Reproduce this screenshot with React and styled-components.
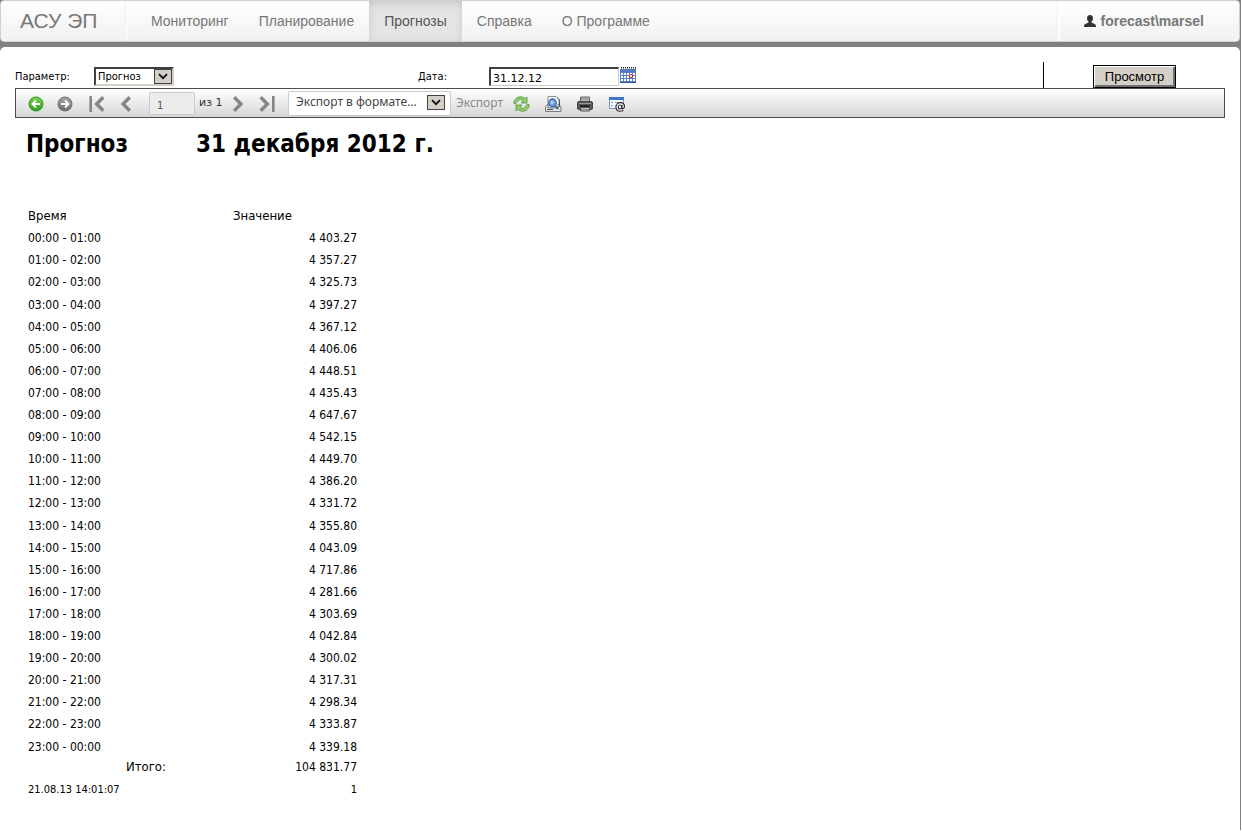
import React from "react";
import styled, { createGlobalStyle } from "styled-components";

const tahoma = '"DejaVu Sans Condensed", "DejaVu Sans", sans-serif';
const verdana = '"DejaVu Sans", sans-serif';
const noto = '"Noto Sans", "DejaVu Sans", sans-serif';
const arial = '"Liberation Sans", Arial, sans-serif';

const GlobalStyle = createGlobalStyle`
  * { box-sizing: border-box; }
  body { margin: 0; background: #fff; color: #000; font: 12px/16px ${tahoma}; }
  button, input, select { font: inherit; color: inherit; margin: 0; }
`;

const Frame = styled.div`
  background: #808080;
  padding-right: 1px;
  margin-right: 1px;
`;

const Navbar = styled.header`
  display: flex;
  align-items: stretch;
  height: 42px;
  border: 1px solid #d0d0d0;
  border-radius: 4px;
  background: linear-gradient(#fff, #f1f1f1);
  font-family: ${arial};
  color: #777;
`;

const Brand = styled.a`
  display: flex;
  align-items: center;
  width: 126px;
  padding-left: 19px;
  border-right: 1px solid #fff;
  box-shadow: inset -1px 0 #f0f0f0;
  font-size: 21px;
  color: inherit;
  text-decoration: none;
`;

const Nav = styled.nav`
  display: flex;
  flex: 1;
  margin-left: 9px;
`;

const NavLink = styled.a`
  display: flex;
  align-items: center;
  padding: 0 15px;
  font-size: 14px;
  text-decoration: none;
  color: ${(p) => (p.$active ? "#555" : "#777")};
  background: ${(p) => (p.$active ? "#e5e5e5" : "none")};
  box-shadow: ${(p) => (p.$active ? "inset 0 3px 8px rgba(0,0,0,.125)" : "none")};
`;

const User = styled.a`
  display: flex;
  align-items: center;
  gap: 4px;
  padding: 0 35px 0 24px;
  border-left: 2px solid #fff;
  box-shadow: -1px 0 #f0f0f0;
  font-size: 14px;
  font-weight: bold;
  color: inherit;
  text-decoration: none;
`;

const Panel = styled.main`
  margin-top: 5px;
  padding: 15px 15px 32px;
  background: #fff;
  border-radius: 5px 5px 0 0;
`;

const Params = styled.form`
  display: grid;
  grid-template-columns: 79px 324px 71px 1fr 182px;
  align-items: center;
  height: 26px;
  font-size: 11px;

  > :not(:last-child) { margin-top: 3px; }
`;

const SelectBox = styled.span`
  position: relative;
  display: inline-block;
  width: ${(p) => p.$width}px;
  height: ${(p) => p.$height}px;
`;

const ParamSelect = styled.select`
  appearance: none;
  display: block;
  width: 100%;
  height: 100%;
  padding: 0 18px 0 2px;
  border: 2px solid;
  border-color: #404040 #d4d0c8 #d4d0c8 #404040;
  border-radius: 0;
  background: #fff;
  line-height: 14px;
`;

const FormatSelect = styled.select`
  appearance: none;
  display: block;
  width: 100%;
  height: 100%;
  padding: 0 28px 2px 7px;
  border: 1px solid #ccc;
  border-radius: 2px;
  background: #fff;
  color: #444;
`;

const DropArrow = styled.span`
  position: absolute;
  top: ${(p) => p.$top}px;
  right: ${(p) => p.$right}px;
  display: grid;
  place-items: center;
  width: 18px;
  height: 15px;
  border: 1px solid #404040;
  background: #d4d0c8;
  pointer-events: none;
`;

const DateField = styled.span`
  display: flex;
  align-items: flex-start;
  gap: 1px;
`;

const DateInput = styled.input`
  width: 130px;
  height: 19px;
  padding: 2px 2px 0;
  border: 1px solid #ccc;
  border-top: 2px solid #404040;
  border-left: 2px solid #404040;
  font-family: ${verdana};
`;

const BareButton = styled.button`
  display: flex;
  padding: 0;
  border: 0;
  background: none;
`;

const ViewCell = styled.span`
  display: flex;
  align-items: flex-end;
  justify-content: center;
  align-self: stretch;
  border-left: 1px solid #000;
`;

const ViewButton = styled.button`
  width: 83px;
  height: 23px;
  padding: 0;
  border: 1px solid #000;
  border-radius: 0;
  background: #d4d0c8;
  box-shadow: inset 1px 1px #fff, inset -2px -2px #707070;
  font-family: ${arial};
  font-size: 13px;
`;

const Toolbar = styled.div`
  display: flex;
  align-items: center;
  height: 30px;
  padding: 0 0 0 5px;
  border: 1px solid #4c4c4c;
  background: linear-gradient(#fff, #d6d6d6);
  font-family: ${noto};
  font-size: 12px;
  color: #333;
`;

const ToolButton = styled.button`
  display: grid;
  place-items: center;
  width: ${(p) => p.$width || 29}px;
  height: 28px;
  padding: 2px 0 0;
  border: 0;
  background: none;
`;

const Pager = styled.div`
  display: flex;
  align-items: center;
  margin: 0 7px 0 3px;
`;

const PageInput = styled.input`
  width: 46px;
  height: 23px;
  margin: 0 4px 0 9px;
  padding: 5px 7px 0;
  border: 1px solid #ccc;
  border-radius: 2px;
  background: #ececec;
  font-family: ${verdana};
  font-size: 10px;
  color: #555;
`;

const PageCount = styled.span`
  width: 24px;
  font: 11px/16px ${verdana};
  white-space: nowrap;
`;

const ExportLink = styled.a`
  width: 49px;
  margin-left: 5px;
  color: #888;
  text-decoration: none;
`;

const Report = styled.section`
  padding: 12px 11px 0;
`;

const Title = styled.h1`
  display: grid;
  grid-template-columns: 170px 1fr;
  margin: 0;
  font-size: 24px;
  line-height: 28px;
`;

const Table = styled.table`
  width: 333px;
  margin-top: 47px;
  border-collapse: collapse;
  table-layout: fixed;

  th, td {
    padding: 0 2px;
    line-height: 22px;
    vertical-align: bottom;
    text-align: left;
    font-weight: normal;
  }
  thead th { font-size: 13px; }
  tbody tr { height: 22px; }
  tbody tr:nth-child(10n + 4) { height: 23px; }
`;

const Value = styled.td`
  && { text-align: right; }
`;

const TotalRow = styled.tr`
  && th, && td { line-height: 18px; }
  && th { font-size: 13px; }
`;

const ReportFooter = styled.footer`
  display: flex;
  justify-content: space-between;
  width: 333px;
  padding: 6px 2px 0;
  font-size: 11px;
`;

const values = [
  "4 403.27", "4 357.27", "4 325.73", "4 397.27", "4 367.12", "4 406.06",
  "4 448.51", "4 435.43", "4 647.67", "4 542.15", "4 449.70", "4 386.20",
  "4 331.72", "4 355.80", "4 043.09", "4 717.86", "4 281.66", "4 303.69",
  "4 042.84", "4 300.02", "4 317.31", "4 298.34", "4 333.87", "4 339.18",
];

const hour = (n) => `${String(n % 24).padStart(2, "0")}:00`;

const Chevron = () => (
  <svg width="10" height="7" viewBox="0 0 10 7" fill="none" stroke="#111" strokeWidth="1.8">
    <path d="M1 1.2 5 5.2 9 1.2" />
  </svg>
);

const RoundArrow = ({ light, dark, back }) => (
  <svg width="16" height="16" viewBox="0 0 16 16">
    <defs>
      <linearGradient id={back ? "goBack" : "goNext"} x2="0" y2="1">
        <stop offset="0" stopColor={light} />
        <stop offset="1" stopColor={dark} />
      </linearGradient>
    </defs>
    <circle cx="8" cy="8" r="7" fill={`url(#${back ? "goBack" : "goNext"})`} stroke={dark} />
    <path
      d={back ? "M12 8H4.8M8 4.5 4.5 8 8 11.5" : "M4 8h7.2M8 4.5 11.5 8 8 11.5"}
      fill="none"
      stroke="#fff"
      strokeWidth="2"
    />
  </svg>
);

const PageArrow = ({ flip, bar }) => (
  <svg width="16" height="16" viewBox="0 0 16 16" fill="none" stroke="#858585" strokeWidth="3.4">
    <g transform={flip ? "translate(16 0) scale(-1 1)" : undefined}>
      {bar && <path d="M1.7 0V16" strokeWidth="2.6" />}
      <path d={bar ? "M14.3 1.3 7.6 8l6.7 6.7" : "M11.8 1.3 5.1 8l6.7 6.7"} />
    </g>
  </svg>
);

const CalendarIcon = () => (
  <svg width="16" height="16" viewBox="0 0 16 16">
    <path d="M0 2h16v14H0z" fill="#5c80c4" />
    <path d="M0 2h16v3H0z" fill="#5379c2" />
    <path d="M0 15h16v1H0z" fill="#2f57a5" />
    <path d="M1 .8h15" stroke="#111" strokeWidth="1.6" strokeDasharray="1 1" />
    <path
      d="M1 6h2v2H1zM4 6h2v2H4zM7 6h2v2H7zM10 6h2v2h-2zM13 6h2v2h-2zM1 9h2v2H1zM4 9h2v2H4zM7 9h2v2H7zM13 9h2v2h-2zM1 12h2v2H1zM4 12h2v2H4zM7 12h2v2H7zM10 12h2v2h-2zM13 12h2v2h-2z"
      fill="#fff"
    />
    <path d="M9.5 7.5h3v3h-3z" fill="#fff" stroke="#d3333b" />
  </svg>
);

const RefreshIcon = () => (
  <svg width="17" height="16" viewBox="0 0 17 16" fill="#8fce6a" stroke="#4b9440" strokeWidth=".8">
    <path d="M.8 7.500C.8 3.500 4 .8 7.500.8c2 0 3.500.7 4.700 1.900L14 1v6H8l2.200-2.200C8.500 3.200 5 3.300 4 6.300L2.500 8z" />
    <path d="M16.200 8.500c0 4-3.200 6.700-6.700 6.700-2 0-3.500-.7-4.700-1.900L3 15V9h6l-2.200 2.200c1.700 1.600 5.200 1.500 6.200-1.500L14.500 8z" />
  </svg>
);

const PreviewIcon = () => (
  <svg width="17" height="16" viewBox="0 0 17 16">
    <path d="M3 .5h8l3 3V12H3z" fill="#fff" stroke="#8a8f96" />
    <path d="M.5 10.500 3 8v4h10V8l3 2.500v5H.500z" fill="#e2e4e6" stroke="#777b80" />
    <path d="M12 1.500 14.500 4v7" fill="none" stroke="#555" />
    <circle cx="7.500" cy="6.800" r="3.800" fill="#6ea6e4" stroke="#3a6cab" strokeWidth="1.300" />
    <circle cx="7" cy="6.300" r="1.500" fill="#b5d3f5" />
    <path d="m10.300 9.800 3 3" stroke="#3a5f93" strokeWidth="1.800" />
    <path d="M2 13.500h6" stroke="#555" />
  </svg>
);

const PrinterIcon = () => (
  <svg width="16" height="16" viewBox="0 0 16 16">
    <path d="M3.500 1h9v5h-9z" fill="#bbb" stroke="#666" />
    <path d="M4 3h8" stroke="#888" />
    <rect x=".5" y="5.500" width="15" height="8" rx="1.500" fill="#5a5a5c" stroke="#444" />
    <path d="M2 7.500h12" stroke="#999" />
    <path d="M3 10h10" stroke="#171717" strokeWidth="1.500" />
    <path d="M3.500 11.500h9v3.500h-9z" fill="#c8c8c8" stroke="#555" />
    <path d="M4 13.300h8" stroke="#888" />
  </svg>
);

const FeedIcon = () => (
  <svg width="17" height="16" viewBox="0 0 17 16">
    <path d="M.5 1.500h14v11H.500z" fill="#f5f9ff" stroke="#6a98cf" />
    <path d="M0 1h15v3H0z" fill="#3f78c4" />
    <path d="M2 6.500h2m2 0h6M2 9.500h2m2 0h3" stroke="#7f9fc8" />
    <circle cx="11.500" cy="11" r="5" fill="#fff" fillOpacity=".8" />
    <g fill="none" stroke="#222" strokeWidth="1.100">
      <ellipse cx="11" cy="11" rx="1.800" ry="2" />
      <path d="M13.200 8.700 12.800 12c0 1.500 2.700 1.200 2.700-1.400 0-2.400-1.700-4-4-4-2.600 0-4.600 1.900-4.600 4.500s1.900 4.200 4.400 4.200c1.300 0 2.300-.3 3.200-.9" />
    </g>
  </svg>
);

const UserIcon = () => (
  <svg width="12" height="12" viewBox="0 0 12 12" fill="#333">
    <path d="M6 0c2 0 3 1.300 3 3.200 0 1.500-.6 2.700-1.500 3.300v1c.6.800 4.500 1.200 4.500 3.500v1H0v-1c0-2.300 3.900-2.700 4.500-3.500v-1C3.600 5.900 3 4.700 3 3.200 3 1.300 4 0 6 0z" />
  </svg>
);

export default function App() {
  return (
    <>
      <GlobalStyle />
      <Frame>
        <Navbar>
          <Brand href="#">АСУ ЭП</Brand>
          <Nav>
            <NavLink href="#">Мониторинг</NavLink>
            <NavLink href="#">Планирование</NavLink>
            <NavLink href="#" $active aria-current="page">Прогнозы</NavLink>
            <NavLink href="#">Справка</NavLink>
            <NavLink href="#">О Программе</NavLink>
          </Nav>
          <User href="#">
            <UserIcon />
            forecast\marsel
          </User>
        </Navbar>
        <Panel>
          <Params onSubmit={(e) => e.preventDefault()}>
            <label htmlFor="kind">Параметр:</label>
            <SelectBox $width={80} $height={19}>
              <ParamSelect id="kind">
                <option>Прогноз</option>
              </ParamSelect>
              <DropArrow $top={2} $right={2}><Chevron /></DropArrow>
            </SelectBox>
            <label htmlFor="date">Дата:</label>
            <DateField>
              <DateInput id="date" defaultValue="31.12.12" />
              <BareButton type="button" aria-label="Календарь"><CalendarIcon /></BareButton>
            </DateField>
            <ViewCell>
              <ViewButton type="submit">Просмотр</ViewButton>
            </ViewCell>
          </Params>
          <Toolbar>
            <ToolButton aria-label="Назад"><RoundArrow back light="#7bd552" dark="#2f9a1c" /></ToolButton>
            <ToolButton aria-label="Вперёд"><RoundArrow light="#a5a5a5" dark="#6c6c6c" /></ToolButton>
            <Pager>
              <ToolButton aria-label="Первая страница"><PageArrow bar /></ToolButton>
              <ToolButton aria-label="Предыдущая страница"><PageArrow /></ToolButton>
              <PageInput aria-label="Страница" defaultValue="1" />
              <PageCount>из 1</PageCount>
              <ToolButton aria-label="Следующая страница"><PageArrow flip /></ToolButton>
              <ToolButton aria-label="Последняя страница"><PageArrow flip bar /></ToolButton>
            </Pager>
            <SelectBox $width={163} $height={25}>
              <FormatSelect aria-label="Формат экспорта">
                <option>Экспорт в формате...</option>
              </FormatSelect>
              <DropArrow $top={4} $right={6}><Chevron /></DropArrow>
            </SelectBox>
            <ExportLink href="#">Экспорт</ExportLink>
            <ToolButton $width={32} aria-label="Обновить"><RefreshIcon /></ToolButton>
            <ToolButton $width={32} aria-label="Просмотр печати"><PreviewIcon /></ToolButton>
            <ToolButton $width={32} aria-label="Печать"><PrinterIcon /></ToolButton>
            <ToolButton $width={32} aria-label="Веб-канал"><FeedIcon /></ToolButton>
          </Toolbar>
          <Report>
            <Title>
              <span>Прогноз</span>
              <span>31 декабря 2012 г.</span>
            </Title>
            <Table>
              <colgroup>
                <col width="98" />
                <col width="107" />
                <col width="128" />
              </colgroup>
              <thead>
                <tr>
                  <th colSpan={2}>Время</th>
                  <th>Значение</th>
                </tr>
              </thead>
              <tbody>
                {values.map((value, i) => (
                  <tr key={i}>
                    <td colSpan={2}>{hour(i)} - {hour(i + 1)}</td>
                    <Value>{value}</Value>
                  </tr>
                ))}
              </tbody>
              <tfoot>
                <TotalRow>
                  <td />
                  <th scope="row">Итого:</th>
                  <Value>104 831.77</Value>
                </TotalRow>
              </tfoot>
            </Table>
            <ReportFooter>
              <time>21.08.13 14:01:07</time>
              <span>1</span>
            </ReportFooter>
          </Report>
        </Panel>
      </Frame>
    </>
  );
}
